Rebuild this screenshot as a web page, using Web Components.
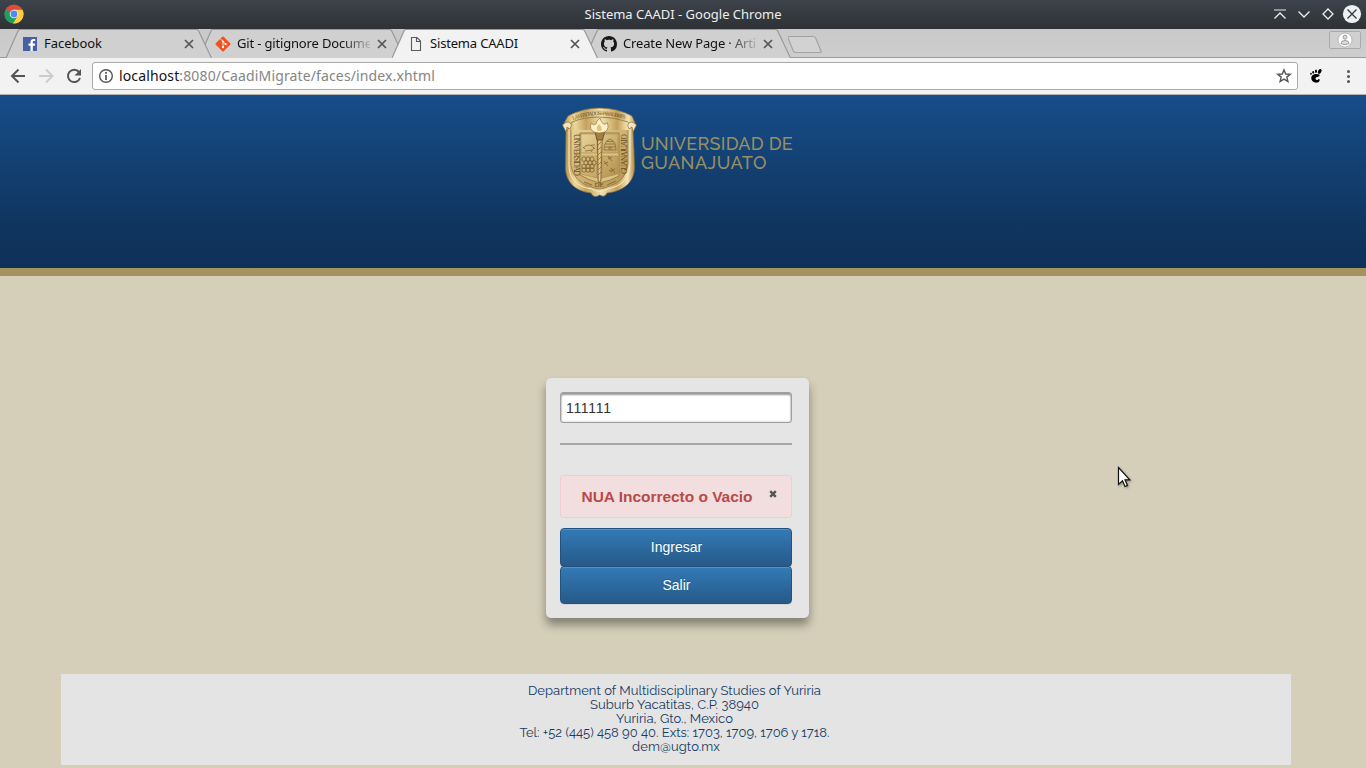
<!DOCTYPE html>
<html lang="es"><head><meta charset="utf-8"><title>Sistema CAADI</title>
<style>html,body{margin:0;width:1366px;height:768px;overflow:hidden;background:#d5cfb9}body{font-family:"Noto Sans",sans-serif}</style></head>
<body><caadi-app></caadi-app>
<script>
const define=(name,html,ready)=>{
  const t=document.createElement('template');t.innerHTML=html;
  customElements.define(name,class extends HTMLElement{
    connectedCallback(){ if(this.shadowRoot)return; this.attachShadow({mode:'open'}).append(t.content.cloneNode(true)); if(ready)ready(this,this.shadowRoot); }
  });
};
/* Text line whose tracking is tuned to a given width */
define('fit-text','<style>:host{display:inline-block;white-space:nowrap}</style><slot></slot>',el=>{
  const n=el.textContent.length,w=+el.getAttribute('w');
  const nat=el.getBoundingClientRect().width;
  el.style.letterSpacing=((w-nat)/n)+'px';
});
const icons={
 chrome:'<svg width="20" height="20" viewBox="0 0 20 20"><circle cx="10" cy="10" r="9.5" fill="#dd4b3e"/><path d="M10 10L1.8 5.2A9.5 9.5 0 0 0 9 19.4L14 12Z" fill="#1aa15f"/><path d="M10 5.7H18.5A9.5 9.5 0 0 1 9 19.45L13.8 12Z" fill="#ffce44"/><circle cx="10" cy="10" r="4.3" fill="#f4f4f4"/><circle cx="10" cy="10" r="3.4" fill="#4c8bf5"/></svg>',
 facebook:'<svg width="16" height="16" viewBox="0 0 16 16"><rect x="1" y="1" width="14" height="14" fill="#4560a5"/><path d="M10.8 15V9.7h2l.3-2.2h-2.3V6.2c0-.7.3-1.1 1.1-1.1h1.3V3.1C12.8 3 12.200 3 11.600 3 9.700 3 8.500 4 8.500 6v1.500h-2v2.200h2V15z" fill="#fff"/></svg>',
 git:'<svg width="16" height="16" viewBox="0 0 16 16"><rect x="2.400" y="2.400" width="11.200" height="11.200" rx="1" transform="rotate(45 8 8)" fill="#f4511e"/><g stroke="#f7ddd2" stroke-width="1" fill="none"><path d="M5.500 3L8 5.500V11M8 5.500L10.500 8"/></g><g fill="#fff"><circle cx="8" cy="5.600" r="1.150"/><circle cx="8" cy="11.200" r="1.150"/><circle cx="10.600" cy="8.200" r="1.150"/></g></svg>',
 page:'<svg width="16" height="16" viewBox="0 0 16 16"><path d="M3.500 1.500H9L12.500 5V14.500H3.500ZM8.500 1.500V5.500H12.500" fill="none" stroke="#5a5a5a" stroke-width="1.100"/></svg>',
 github:'<svg width="16" height="16" viewBox="0 0 16 16"><path fill="#191717" d="M8 0C3.580 0 0 3.580 0 8c0 3.540 2.290 6.530 5.470 7.590.4.070.55-.17.55-.38 0-.19-.01-.82-.01-1.490-2.010.37-2.530-.49-2.690-.94-.09-.23-.48-.94-.82-1.130-.28-.15-.68-.52-.01-.53.63-.01 1.080.58 1.230.82.72 1.210 1.870.87 2.330.66.07-.52.28-.87.51-1.070-1.780-.2-3.640-.89-3.640-3.950 0-.87.31-1.590.82-2.150-.08-.2-.36-1.020.08-2.120 0 0 .67-.21 2.200.82.64-.18 1.320-.27 2-.27s1.360.09 2 .27c1.530-1.040 2.200-.82 2.200-.82.44 1.100.16 1.920.08 2.120.51.56.82 1.270.82 2.150 0 3.070-1.870 3.750-3.650 3.950.29.25.54.73.54 1.480 0 1.070-.01 1.930-.01 2.200 0 .21.15.46.55.38A8.010 8.010 0 0 0 16 8c0-4.420-3.580-8-8-8z"/></svg>'
};
define('ui-icon','<style>:host{display:block;line-height:0;flex:none}svg{display:block}</style><span></span>',(el,r)=>{r.querySelector('span').innerHTML=icons[el.getAttribute('name')]});

define('window-title',`<style>:host{display:grid;grid-template-columns:135px 1fr 135px;align-items:center;height:29px;background:linear-gradient(#3d434a,#2e3236);color:#eceeef;font-size:13px}
ui-icon{margin-left:4px;margin-top:-1px}.t{text-align:center;line-height:18px;padding-bottom:2px}svg{display:block}</style>
<ui-icon name="chrome"></ui-icon><div class="t"><fit-text w="197">Sistema CAADI - Google Chrome</fit-text></div>
<svg width="135" height="29" viewBox="1231 0 135 29" fill="none" stroke="#eceeef" stroke-width="1.300"><path d="M1274.500 18.500L1280 13L1285.500 18.500M1298.500 11.500L1304 17L1309.500 11.500M1328 9L1333 14L1328 19L1323 14Z"/><path d="M1274 10H1286" stroke="#9a9ea1" stroke-width="1.800"/><circle cx="1352" cy="14" r="9.100" fill="#eff0f1" stroke="none"/><path d="M1347.500 9.500L1356.500 18.500M1356.500 9.500L1347.500 18.500" stroke="#30353a"/></svg>`);

define('browser-tab',`<style>:host{display:grid;grid-template:29px/206px;width:206px;height:29px;margin-right:-13px;flex:none;position:relative}
svg.s,.c{grid-area:1/1}.c{display:flex;align-items:center;padding:0 17px 0 16px;height:29px;color:#111;font-size:13px}
.l{width:133px;margin-left:6px;overflow:hidden;white-space:nowrap;line-height:18px;padding-bottom:2px}:host([fade]) .l{-webkit-mask-image:linear-gradient(90deg,#000 104px,transparent 138px)}
.x{margin-left:7px}path.f{fill:#d0d0d0}:host([active]) path.f{fill:#f2f2f2}</style>
<svg class="s" width="206" height="29" viewBox="0 0 206 29"><path class="f" d="M0 29L12 2Q12.500 .5 14 .5H190Q192 .5 192.700 2L205.500 29Z"/><path d="M0 29L12 2Q12.500 .5 14 .5H190Q192 .5 192.700 2L205.500 29" fill="none" stroke="#999" stroke-width="1.200"/></svg>
<div class="c"><ui-icon></ui-icon><div class="l"><slot></slot></div><svg class="x" width="10" height="10" viewBox="0 0 10 10"><path d="M1 1L9 9M9 1L1 9" stroke="#555" stroke-width="1.700"/></svg></div>`,(el,r)=>{
  const i=r.querySelector('ui-icon');i.setAttribute('name',el.getAttribute('icon'));i.shadowRoot&&(i.shadowRoot.querySelector('span').innerHTML=icons[el.getAttribute('icon')]);
});
icons[null]='';
define('tab-strip',`<style>:host{display:flex;height:29px;box-sizing:border-box;background:linear-gradient(#c9c9c9,#cecece);padding-left:6px;box-shadow:inset 0 -1px #9b9b9b;overflow:hidden;align-items:flex-start}
browser-tab:nth-of-type(1){z-index:3}browser-tab:nth-of-type(2){z-index:2}browser-tab[active]{z-index:4}
.n{margin:6px 0 0 10px}.u{margin:2px 5px 0 auto}svg{display:block}</style>
<browser-tab icon="facebook"><fit-text w="58">Facebook</fit-text></browser-tab><browser-tab icon="git" fade><fit-text w="135">Git - gitignore Docume</fit-text></browser-tab><browser-tab active icon="page"><fit-text w="88">Sistema CAADI</fit-text></browser-tab><browser-tab icon="github" fade><fit-text w="133">Create New Page · Arti</fit-text></browser-tab>
<svg class="n" width="38" height="20" viewBox="-1 0 38 20"><path d="M4 1.500H27Q29 1.500 29.700 3L35 16Q35.500 17.500 34 17.500H10Q8 17.500 7.300 16L2 3Q1.500 1.500 4 1.500Z" fill="#d2d2d2" stroke="#a3a3a3" stroke-width="1.200" transform="translate(-3)"/></svg>
<svg class="u" width="32" height="18" viewBox="0 0 32 18"><rect x=".5" y=".5" width="31" height="17" rx="1" fill="#d0d0d0" stroke="#a9a9a9"/><circle cx="16" cy="9" r="7" fill="#fff" stroke="#999" stroke-width=".6"/><g fill="#ddd" stroke="#999"><circle cx="16" cy="6.200" r="2"/><path d="M12 12.500Q12 9.500 16 9.500T20 12.500Q18.500 13.500 16 13.500T12 12.500Z"/></g></svg>`);

define('browser-toolbar',`<style>:host{display:flex;align-items:flex-start;height:37px;box-sizing:border-box;background:#f2f2f2;border-bottom:1px solid #b6b4b0}
.nav,.m{flex:none;display:block}.u{box-sizing:border-box;width:1206px;height:28px;margin-top:4px;border:1px solid #a8a8a8;border-radius:3px;background:#fff;display:flex;align-items:center;padding:0 5px 0 5px;font-size:14px}
.u fit-text{margin-left:5px;line-height:20px;color:#858585}.u b{font-weight:400;color:#111}.star{margin-left:auto}.u svg{display:block}</style>
<svg class="nav" width="92" height="36" viewBox="0 58 92 36" fill="none" stroke-width="2"><path d="M25 76H12.500M18.500 69.500L12 76L18.500 82.500" stroke="#555"/><path d="M39 76H51.500M46 69.500L52.500 76L46 82.500" stroke="#ccc"/><path d="M79 72A6.200 6.200 0 1 0 80 78" stroke="#555"/><path d="M81 69V75.500H74.500Z" fill="#555"/></svg>
<div class="u"><svg width="16" height="16" viewBox="0 0 16 16"><circle cx="8" cy="8" r="6.300" fill="none" stroke="#555" stroke-width="1.400"/><path d="M8 7V12M8 4V5.700" stroke="#555" stroke-width="1.700"/></svg><fit-text w="316"><b>localhost</b>:8080/CaadiMigrate/faces/index.xhtml</fit-text>
<svg class="star" width="16" height="16" viewBox="0 0 16 16"><path d="M8 1.900L9.700 6L14.200 6.300L10.800 9.100L11.900 13.500L8 11.100L4.100 13.500L5.200 9.100L1.800 6.300L6.300 6Z" fill="none" stroke="#555" stroke-width="1.400"/></svg></div>
<svg class="m" width="68" height="36" viewBox="1298 58 68 36"><g><path d="M1319.200 74.600C1316 73.200 1311.300 74.300 1311.300 78C1311.300 81.300 1314.500 83 1317 82.600C1319.600 82.100 1320.400 79.300 1319 78.900C1318.200 78.700 1318 80.300 1316.500 80C1315 79.500 1315.200 77.300 1317 77.100C1318.700 76.900 1320.500 75.600 1319.200 74.600Z"/><ellipse cx="1319.700" cy="71.400" rx="1.700" ry="2.600" transform="rotate(25 1319.700 71.400)"/><ellipse cx="1316" cy="71.300" rx="1" ry="1.700"/><ellipse cx="1313.200" cy="72.300" rx=".9" ry="1.400"/><ellipse cx="1311" cy="73.800" rx=".8" ry="1.100"/></g><g fill="#555"><circle cx="1348.500" cy="71.500" r="1.500"/><circle cx="1348.500" cy="76.500" r="1.500"/><circle cx="1348.500" cy="81.500" r="1.500"/></g></svg>`);

define('university-crest',`<style>:host{display:block;width:76px;height:92px}svg{display:block}</style>
<svg width="76" height="92" viewBox="561 107 76 92"><defs><linearGradient id="g"><stop stop-color="#b4934f"/><stop offset=".14" stop-color="#ecd79b"/><stop offset=".3" stop-color="#c4a25c"/><stop offset=".52" stop-color="#f0e0ad"/><stop offset=".75" stop-color="#c4a05a"/><stop offset=".9" stop-color="#f3e4b4"/><stop offset="1" stop-color="#b18b4a"/></linearGradient><linearGradient id="h" x1="0" x2="1" y1="0" y2="1"><stop stop-color="#e6d298"/><stop offset="1" stop-color="#b5914c"/></linearGradient></defs>
<path d="M566 130Q564 125 569 121Q599 112 630 121Q635 126 633 131Q634 147 634.500 166C635 181 625 191 607 193Q605 198 599.500 195Q594 199 591 193C574 191 565 181 565.500 166Z" fill="url(#g)" stroke="#8a6d3b" stroke-width=".7"/>
<path d="M569 129V165Q569 186 592 189Q600 194 607 189Q630 185 630 164V129" fill="none" stroke="#f8ebc0"/>
<path d="M571 130V165Q573 182 592 187Q600 191 607 187Q627 181 628 164V130" fill="url(#h)" stroke="#8a6d3b" stroke-width=".7"/>
<path d="M580 133H619V176Q610 181 599.500 183Q588 180 580 175Z" fill="#dcc384" stroke="#8c6f3b" stroke-width=".8"/>
<g fill="url(#h)" stroke="#a98852" stroke-width=".6"><path d="M581 134H597V153H581ZM602 134H618V153H602ZM581 156H597V178L581 174ZM602 156H618V174L602 178Z"/></g>
<g fill="none" stroke="#896735" stroke-width=".8"><path d="M583 147L585 149M593 147L595 149M583 148Q589 142 594 148L591 152M585 151L592 150M591 145H595"/><path d="M604 150Q604 141 610 139Q616 141 616 150ZM605 147H615M605.500 144H614.500M607 141.500H613M609 150V147H611V150"/></g>
<g fill="none" stroke="#80622f" stroke-width=".8"><path d="M582 158l2-1.200 2 1.200v2.400l-2 1.200-2-1.200zM586 158l2-1.200 2 1.200v2.400l-2 1.200-2-1.200zM590 158l2-1.200 2 1.200v2.400l-2 1.200-2-1.200zM584 161.600l2-1.200 2 1.200v2.400l-2 1.200-2-1.200zM588 161.600l2-1.200 2 1.200v2.400l-2 1.200-2-1.200zM592 161.600l2-1.200 2 1.200v2.400l-2 1.200-2-1.200zM582 165.200l2-1.200 2 1.200v2.400l-2 1.200-2-1.200zM586 165.200l2-1.200 2 1.200v2.400l-2 1.200-2-1.200zM590 165.200l2-1.200 2 1.200v2.400l-2 1.200-2-1.200zM582 168.800l2-1.200 2 1.200v2.400l-2 1.200-2-1.200zM586 168.800l2-1.200 2 1.200v2.400l-2 1.200-2-1.200zM590 168.800l2-1.200 2 1.200v2.400l-2 1.200-2-1.200z"/><path d="M608 159l4-2M608 156l4 5M604 164l4-2M604 161l4 5M611 171l4-2M611 168l4 5M609 170l3 2"/></g>
<path d="M563 125L568 116Q583 108 599.500 108Q617 108 632 116L636 125L633 129L628 122Q614 117 599.500 117Q584 117 572 122L567 131Z" fill="url(#g)" stroke="#8a6d3b" stroke-width=".7"/><path d="M562.500 125Q569 119 571.500 125L570 129L567 127L566 132ZM636.500 125Q630 119 627.500 125L629 129L632 127L633 132Z" fill="#f4e6b9" stroke="#856735" stroke-width=".6"/>
<path d="M597.500 139H602L601 180L599.500 183L598 180Z" fill="url(#g)" stroke="#6e542d" stroke-width=".8"/><path d="M598 145L601 142M598 150L601 147M598 155L601 152M598 160L601 157M598 165L601 162M598 170L601 167M598 175L601 172" stroke="#6e542d" stroke-width=".6"/>
<path d="M595 132H604.500L602.500 140H597Z" fill="#a47f42" stroke="#604622" stroke-width=".8"/><path d="M594 132Q588.500 129 591.500 123Q593 126 596 124Q596 121 600 118Q601 122 603.500 124Q606 125 607 122.500Q610 128 605 132Q599 134 594 132Z" fill="#fff0c8" stroke="#94703c" stroke-width=".7"/><path d="M598 131Q595 128 599 124Q603 128 601 131" fill="#dfc27f"/>
<path id="a" d="M573 120Q599 110 628 120" fill="none"/><text font-family="Liberation Serif" font-size="5.500" fill="#6d522b"><textPath href="#a" textLength="53">LA VERDAD OS HARA LIBRES</textPath></text>
<g font-family="Liberation Serif" font-size="7.500" fill="#694c24"><text transform="translate(573.500 134) rotate(90)" textLength="42">UNIVERSIDAD</text><text transform="translate(626.500 174) rotate(-90)" textLength="40">GUANAJUATO</text><text x="594.500" y="187" font-size="7">DE</text></g><path d="M584 182L592 185M607 185L616 181" stroke="#8e6a37" fill="none"/></svg>`);

define('site-header',`<style>:host{display:flex;box-sizing:border-box;height:181px;border-bottom:8px solid #a4935e;background:linear-gradient(#174d89 0,#0f345d 78%,#0e3159);padding:12px 0 0 561px;color:#998f60;font:500 18px/18px Raleway,Lato,sans-serif}
.t{padding-top:28px;margin-left:4px}.t div{height:18px}.t div+div{margin-top:1px}</style>
<university-crest></university-crest><div class="t"><div><fit-text w="152">UNIVERSIDAD DE</fit-text></div><div><fit-text w="126">GUANAJUATO</fit-text></div></div>`);

define('action-button',`<style>:host{display:block;margin-bottom:-1px}button{display:block;width:100%;height:39px;box-sizing:border-box;border:1px solid #23527c;border-radius:4px;background:linear-gradient(#337ab7,#265a88);box-shadow:inset 0 1px 0 rgba(255,255,255,.18),0 1px 1px rgba(0,0,0,.07);color:#fff;font:14px/20px "Liberation Sans",sans-serif;text-shadow:0 -1px 0 rgba(0,0,0,.2);padding:0 0 1px 1px}:host(:last-of-type) button{height:38px;padding-bottom:0}</style><button><slot></slot></button>`);
define('alert-message',`<style>:host{display:flex;box-sizing:border-box;height:43px;border:1px solid #eccfd3;border-radius:3px;background:#f2dede;color:#b94a48;align-items:center;padding-left:20.500px;font:bold 15.500px/20px "Liberation Sans",sans-serif}svg{margin:-5px 0 0 16.500px}</style><fit-text w="171">NUA Incorrecto o Vacio</fit-text><svg width="8" height="8" viewBox="0 0 8 8"><path d="M1.200 1.200L6.800 6.800M6.800 1.200L1.200 6.800" stroke="#555" stroke-width="2.400"/></svg>`);
define('login-card',`<style>:host{display:block;box-sizing:border-box;width:263px;height:240px;padding:14px 17px 0 14px;border-radius:5px;background:#e5e5e5;box-shadow:0 7px 10px rgba(0,0,0,.38)}
input{display:block;width:232px;height:31px;box-sizing:border-box;border:1px solid #9e9e9e;border-radius:3px;background:#fff;box-shadow:inset 0 2px 2px #999,inset 0 0 2px #aaa;padding:1px 5px;font:14px "Liberation Sans",sans-serif;font-kerning:none;letter-spacing:-.35px;color:#333}
.r{height:2px;background:#a6a6a6;margin:20px 0 30px}alert-message{margin-bottom:10px}</style>
<input value="111111"><div class="r"></div><alert-message></alert-message><action-button>Ingresar</action-button><action-button>Salir</action-button>`);
define('site-footer',`<style>:host{display:flex;flex-direction:column;align-items:center;box-sizing:border-box;width:1230px;height:91px;padding:10px 3px 0 0;background:#e4e4e4;color:#163a63;font:13px/14px Raleway,Lato,sans-serif;font-feature-settings:"onum"}fit-text:last-child{margin-left:3px}</style>
<fit-text w="293">Department of Multidisciplinary Studies of Yuriria</fit-text><fit-text w="169">Suburb Yacatitas, C.P. 38940</fit-text><fit-text w="117">Yuriria, Gto., Mexico</fit-text><fit-text w="310">Tel: +52 (445) 458 90 40. Exts: 1703, 1709, 1706 y 1718.</fit-text><fit-text w="88">dem@ugto.mx</fit-text>`);
define('mouse-pointer',`<style>:host{position:absolute;left:1117px;top:466px}svg{display:block;filter:drop-shadow(1px 1px 1px #0005)}</style><svg width="16" height="24" viewBox="0 0 16 24"><path d="M1.500 1.500V18.500L5.500 14.800L8 20.500L10.500 19.400L8 13.800H12.800Z" fill="#fff" stroke="#111" stroke-width="1.200"/></svg>`);
define('caadi-app',`<style>:host{display:block;width:1366px;height:768px;overflow:hidden;position:relative;background:#d5cfb9}login-card{margin:102px 0 0 546px}site-footer{margin:56px 0 0 61px}</style>
<window-title></window-title><tab-strip></tab-strip><browser-toolbar></browser-toolbar><site-header></site-header><login-card></login-card><site-footer></site-footer><mouse-pointer></mouse-pointer>`);
</script></body></html>
